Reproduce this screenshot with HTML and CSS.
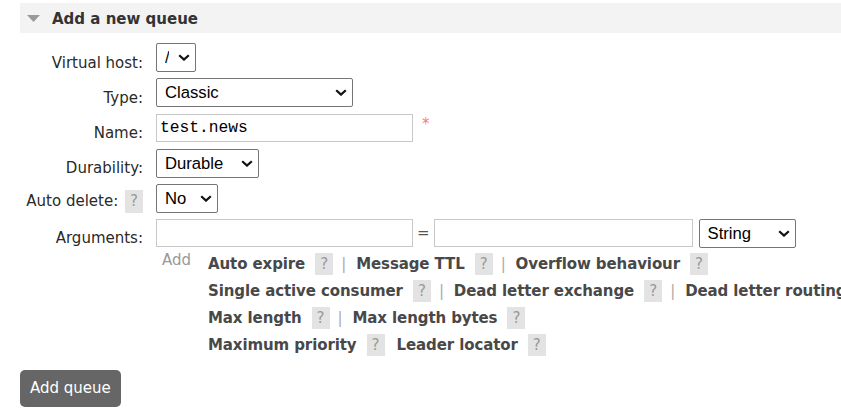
FILE: index.html
```html
<!DOCTYPE html>
<html>
<head>
<meta charset="utf-8">
<link rel="stylesheet" href="styles.css">
</head>
<body>
<div class="section">
  <h2 class="sec-head">
    <svg class="tri" width="13" height="7" viewBox="0 0 13 7"><polygon points="0,0 13,0 6.5,7" fill="#9a9a9a"/></svg>
    <span>Add a new queue</span>
  </h2>
  <form class="form">
    <label class="lbl">Virtual host:</label>
    <div class="ctl">
      <span class="sel w-vh"><select><option>/</option></select><svg class="chev" width="12" height="7" viewBox="0 0 12 7"><path d="M1.2 1.2 L6 5.6 L10.8 1.2" fill="none" stroke="#111" stroke-width="2.2"/></svg></span>
    </div>

    <label class="lbl">Type:</label>
    <div class="ctl">
      <span class="sel w-type"><select><option>Classic</option></select><svg class="chev" width="12" height="7" viewBox="0 0 12 7"><path d="M1.2 1.2 L6 5.6 L10.8 1.2" fill="none" stroke="#111" stroke-width="2.2"/></svg></span>
    </div>

    <label class="lbl">Name:</label>
    <div class="ctl">
      <input class="txt w-name" type="text" value="test.news"><span class="req">*</span>
    </div>

    <label class="lbl">Durability:</label>
    <div class="ctl">
      <span class="sel w-dur"><select><option>Durable</option></select><svg class="chev" width="12" height="7" viewBox="0 0 12 7"><path d="M1.2 1.2 L6 5.6 L10.8 1.2" fill="none" stroke="#111" stroke-width="2.2"/></svg></span>
    </div>

    <label class="lbl lbl-help">Auto delete: <span class="help">?</span></label>
    <div class="ctl">
      <span class="sel w-ad"><select><option>No</option></select><svg class="chev" width="12" height="7" viewBox="0 0 12 7"><path d="M1.2 1.2 L6 5.6 L10.8 1.2" fill="none" stroke="#111" stroke-width="2.2"/></svg></span>
    </div>

    <label class="lbl">Arguments:</label>
    <div class="ctl-args">
      <div class="args-line">
        <input class="txt w-key" type="text">
        <span class="eq">=</span>
        <input class="txt w-val" type="text">
        <span class="sel w-str"><select><option>String</option></select><svg class="chev" width="12" height="7" viewBox="0 0 12 7"><path d="M1.2 1.2 L6 5.6 L10.8 1.2" fill="none" stroke="#111" stroke-width="2.2"/></svg></span>
      </div>
      <div class="adds">
        <span class="add">Add</span>
        <div class="links">
          <div class="lrow"><span class="lk">Auto expire</span><span class="help">?</span><span class="sep">|</span><span class="lk">Message TTL</span><span class="help">?</span><span class="sep">|</span><span class="lk">Overflow behaviour</span><span class="help">?</span></div>
          <div class="lrow"><span class="lk">Single active consumer</span><span class="help">?</span><span class="sep">|</span><span class="lk">Dead letter exchange</span><span class="help">?</span><span class="sep">|</span><span class="lk">Dead letter routing key</span><span class="help">?</span></div>
          <div class="lrow"><span class="lk">Max length</span><span class="help">?</span><span class="sep">|</span><span class="lk">Max length bytes</span><span class="help">?</span></div>
          <div class="lrow"><span class="lk">Maximum priority</span><span class="help">?</span><span class="lk lk-gap">Leader locator</span><span class="help">?</span></div>
        </div>
      </div>
    </div>
  </form>
  <button class="btn" type="button">Add queue</button>
</div>
</body>
</html>
```

FILE: styles.css
```css
html, body {
  margin: 0;
  padding: 0;
  overflow: hidden;
  background: #fff;
}
body {
  font-family: "DejaVu Sans", Verdana, sans-serif;
  font-size: 15px;
  color: #2a2a2a;
  width: 841px;
}
.section {
  padding-left: 20px;
}
.sec-head {
  margin: 3px 0 0 0;
  height: 30px;
  background: #f3f3f3;
  display: flex;
  align-items: center;
  gap: 12px;
  padding-left: 7px;
  padding-top: 1px;
  box-sizing: border-box;
  font-size: 15px;
  font-weight: bold;
  color: #333;
  white-space: nowrap;
}
.tri {
  display: block;
  margin-top: 0;
}
.form {
  margin-top: 10px;
  display: grid;
  grid-template-columns: 123px auto;
  column-gap: 13px;
  row-gap: 6.2px;
  grid-auto-rows: minmax(29px, auto);
  align-items: start;
}
.lbl {
  text-align: right;
  padding-top: 10.5px;
  line-height: 18px;
  white-space: nowrap;
  color: #2a2a2a;
}
.lbl-help {
  padding-top: 6px;
}
.ctl {
  height: 29px;
  display: flex;
  align-items: center;
  white-space: nowrap;
}
.sel {
  position: relative;
  display: inline-block;
  height: 29px;
}
.sel select {
  appearance: none;
  -webkit-appearance: none;
  box-sizing: border-box;
  height: 29px;
  width: 100%;
  margin: 0;
  border: 1px solid #767676;
  border-radius: 2px;
  background: #fff;
  font-family: "Liberation Sans", Arial, sans-serif;
  font-size: 16.67px;
  color: #000;
  padding: 0 26px 0 8px;
}
.chev {
  position: absolute;
  right: 6px;
  top: 11px;
  pointer-events: none;
}
.w-vh { width: 40px; }
.w-type { width: 197px; }
.w-dur { width: 103px; }
.w-ad { width: 62px; }
.w-str { width: 97px; margin-left: 6px; }
.txt {
  box-sizing: border-box;
  height: 28px;
  margin: 0;
  border: 1px solid #c8c8c8;
  border-radius: 0;
  padding: 0 3px;
  font-family: "Liberation Mono", "Courier New", monospace;
  font-size: 16.25px;
  color: #000;
  background: #fff;
}
.w-name { width: 257px; }
.w-key { width: 257px; }
.w-val { width: 259px; }
.req {
  color: #f08080;
  font-size: 15px;
  margin-left: 9px;
  align-self: flex-start;
  margin-top: 2px;
}
.ctl-args {
  display: flex;
  flex-direction: column;
}
.args-line {
  height: 29px;
  display: flex;
  align-items: center;
  white-space: nowrap;
}
.eq {
  margin: 0 4px;
  color: #555;
}
.adds {
  display: flex;
  margin-top: 3px;
  white-space: nowrap;
}
.add {
  color: #999;
  line-height: 18px;
  margin-left: 6px;
  width: 46px;
  flex: none;
}
.links {
  line-height: 27px;
  letter-spacing: -0.1px;
}
.lrow {
  white-space: nowrap;
}
.lk {
  font-weight: bold;
  color: #484848;
}
.lk-gap {
  margin-left: 12px;
}
.help {
  display: inline-block;
  width: 18px;
  height: 22px;
  line-height: 22px;
  text-align: center;
  background: #e3e3e3;
  color: #999;
  font-weight: normal;
  margin-left: 10px;
  letter-spacing: 0;
}
.lbl-help .help {
  height: 23px;
  line-height: 23px;
  margin-left: 2px;
}
.sep {
  color: #aaa;
  margin: 0 10px 0 8px;
}
.btn {
  display: block;
  margin-top: 11px;
  height: 37px;
  padding: 0 10px;
  border: none;
  border-radius: 5px;
  background: #666;
  color: #fff;
  font-family: "DejaVu Sans", Verdana, sans-serif;
  font-size: 15px;
}
```
